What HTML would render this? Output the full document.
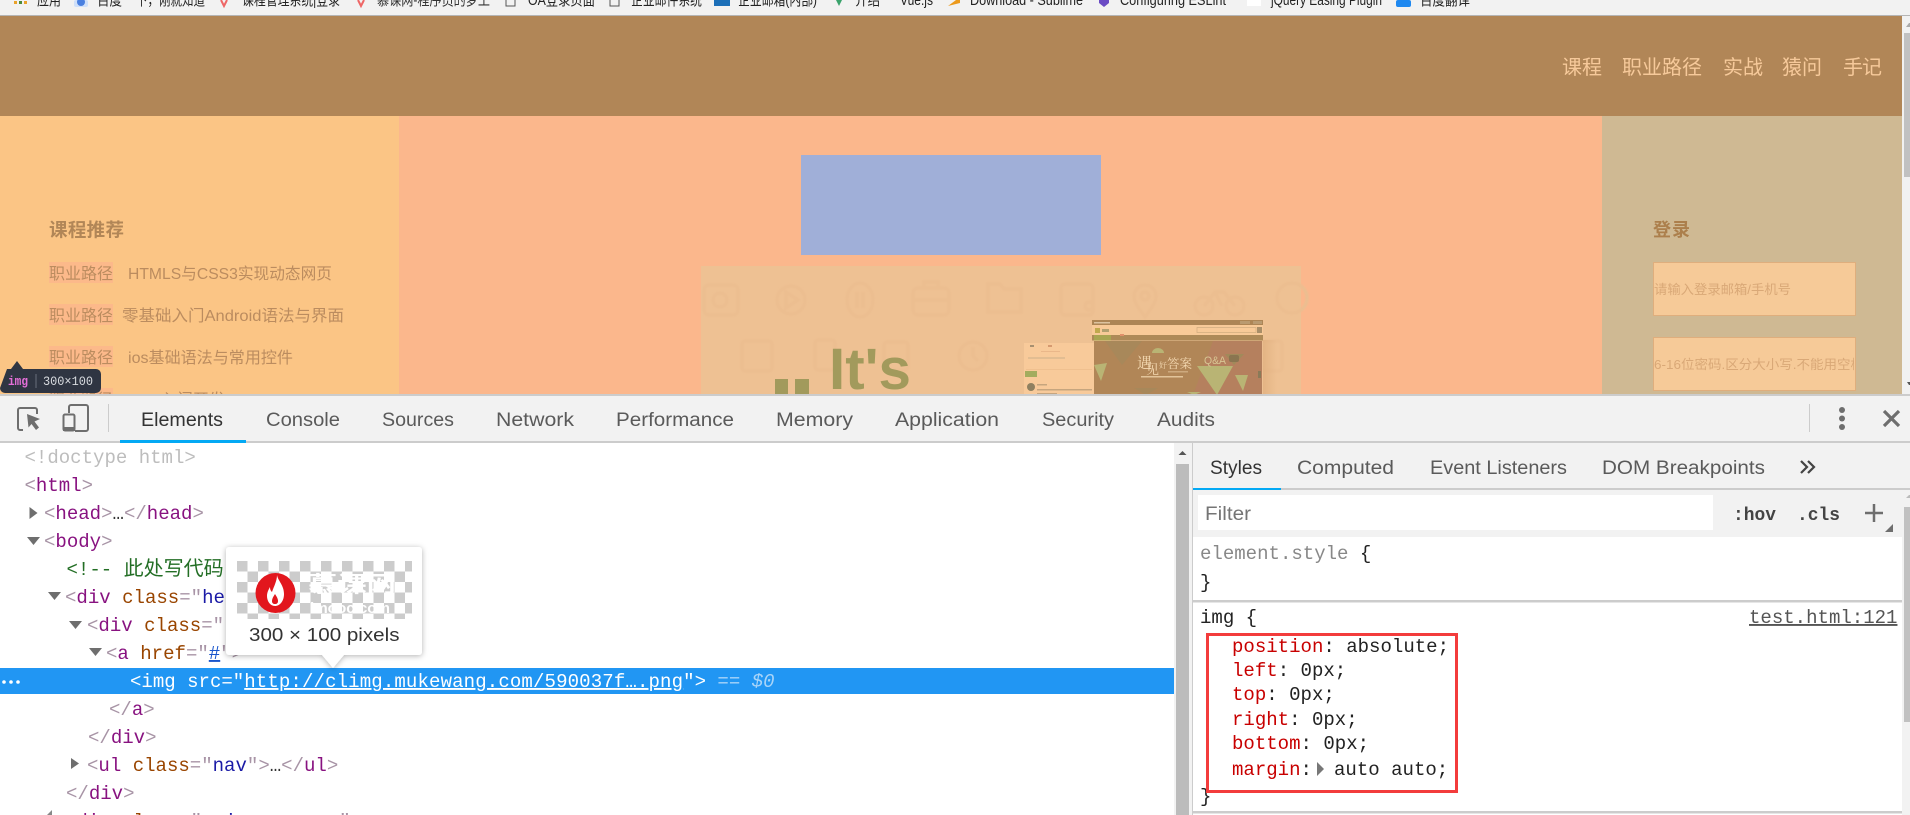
<!DOCTYPE html>
<html lang="zh">
<head>
<meta charset="utf-8">
<title>DevTools</title>
<style>
html,body{margin:0;padding:0;width:1910px;height:815px;overflow:hidden;background:#fff}
svg{display:block}
.s{font-family:"Liberation Sans","Noto Sans CJK SC",sans-serif}
.c{font-family:"Liberation Sans","Noto Sans CJK SC",sans-serif}
.m{font-family:"Liberation Mono","Noto Sans CJK SC",monospace;font-size:19.05px;white-space:pre}
.t{font-family:"Liberation Sans",sans-serif;font-size:19px;fill:#5a5a5a}
.b{font-size:15px;fill:#222}
.p{fill:#a894a6}.n{fill:#881280}.a{fill:#994500}.v{fill:#1a1aa6}
.r{fill:#c80000}.k{fill:#222}
</style>
</head>
<body>
<svg xmlns="http://www.w3.org/2000/svg" width="1910" height="815" viewBox="0 0 1910 815">
<defs>
<pattern id="chk" x="237" y="561" width="21" height="21" patternUnits="userSpaceOnUse">
<rect width="21" height="21" fill="#fff"/>
<rect width="10.5" height="10.5" fill="#ccc"/>
<rect x="10.5" y="10.5" width="10.5" height="10.5" fill="#ccc"/>
</pattern>
<filter id="sh" x="-20%" y="-20%" width="140%" height="140%"><feDropShadow dx="0" dy="1" stdDeviation="3" flood-color="#000" flood-opacity=".3"/></filter>
<filter id="bl"><feGaussianBlur stdDeviation=".8"/></filter>
<linearGradient id="sd" x1="0" x2="1" y1="0" y2="0"><stop offset="0" stop-color="#dfae7d" stop-opacity=".7"/><stop offset="1" stop-color="#dfae7d" stop-opacity="0"/></linearGradient>
<clipPath id="pg"><rect x="0" y="16" width="1902" height="378"/></clipPath>
<clipPath id="pw"><rect x="1653" y="338" width="201" height="52"/></clipPath>
<clipPath id="hero"><rect x="1094" y="341" width="168" height="53"/></clipPath>
</defs>

<!-- bookmarks -->
<rect width="1910" height="15" fill="#f2f2f2"/>
<rect y="15" width="1910" height="1" fill="#b5b5b5"/>
<g fill="#e9a32c"><rect x="14" y="1" width="3" height="3"/><rect x="19" y="1" width="3" height="3" fill="#4a8a3c"/><rect x="24" y="1" width="3" height="3"/></g>
<rect x="74" y="0" width="14" height="7" rx="2" fill="#cfe0fa"/><circle cx="81" cy="2" r="4" fill="#4a80e0"/>
<path d="M221 0l3 6 3-6" stroke="#e66" stroke-width="2" fill="none"/>
<path d="M358 0l3 6 3-6" stroke="#e66" stroke-width="2" fill="none"/>
<path d="M506 0v6h9v-6" stroke="#555" fill="none"/>
<path d="M610 0v6h9v-6" stroke="#555" fill="none"/>
<rect x="714" y="0" width="16" height="6" fill="#1c6fb8"/>
<path d="M836 0l3 6 3-6z" fill="#3aa36c"/>
<path d="M948 6l8-6h4v3z" fill="#ec9a1c"/>
<path d="M1099 0v3l5 4 5-4v-3z" fill="#6a4bc4"/>
<rect x="1247" y="0" width="14" height="6" fill="#fff"/>
<rect x="1396" y="0" width="15" height="7" rx="2" fill="#1e88f0"/>
<g class="c b">
<text x="37" y="5" textLength="24" lengthAdjust="spacingAndGlyphs">应用</text>
<text x="97" y="5" textLength="25" lengthAdjust="spacingAndGlyphs">百度</text>
<text x="136" y="5" textLength="69" lengthAdjust="spacingAndGlyphs">下，刚就知道</text>
<text x="242" y="5" textLength="98" lengthAdjust="spacingAndGlyphs">课程管理系统|登录</text>
<text x="377" y="5" textLength="113" lengthAdjust="spacingAndGlyphs" fill="#333">慕课网-程序员的梦工</text>
<text x="528" y="5" textLength="67" lengthAdjust="spacingAndGlyphs">OA登录页面</text>
<text x="631" y="5" textLength="71" lengthAdjust="spacingAndGlyphs">企业邮件系统</text>
<text x="738" y="5" textLength="79" lengthAdjust="spacingAndGlyphs">企业邮箱(内部)</text>
<text x="855" y="5" textLength="25" lengthAdjust="spacingAndGlyphs">介绍</text>
<text x="900" y="5" textLength="33" lengthAdjust="spacingAndGlyphs">Vue.js</text>
<text x="970" y="5" textLength="113" lengthAdjust="spacingAndGlyphs">Download - Sublime</text>
<text x="1120" y="5" textLength="106" lengthAdjust="spacingAndGlyphs">Configuring ESLint</text>
<text x="1271" y="5" textLength="111" lengthAdjust="spacingAndGlyphs">jQuery Easing Plugin</text>
<text x="1420" y="5" textLength="50" lengthAdjust="spacingAndGlyphs">百度翻译</text>
</g>

<!-- page -->
<rect x="1902" y="16" width="8" height="379" fill="#f1f1f1"/>
<rect x="1904" y="33" width="6" height="144" fill="#c1c1c1"/>
<path d="M1906 27l3-4 1 0v4z" fill="#aaa"/>
<path d="M1907 382h3v3h-1z" fill="#555"/>
<g clip-path="url(#pg)">
<rect x="0" y="16" width="1902" height="100" fill="#b18657"/>
<rect x="0" y="116" width="399" height="280" fill="#fbc585"/>
<rect x="399" y="116" width="1203" height="280" fill="#fbb78c"/>
<rect x="1602" y="116" width="300" height="280" fill="#cfb993"/>

<g class="c" font-size="20" fill="#f6c99a">
<text x="1562" y="74" textLength="40">课程</text>
<text x="1622" y="74" textLength="80">职业路径</text>
<text x="1723" y="74" textLength="40">实战</text>
<text x="1782" y="74" textLength="40">猿问</text>
<text x="1843" y="74" textLength="39">手记</text>
</g>

<text class="c" x="49" y="236.5" font-size="18.5" font-weight="700" fill="#b18657" textLength="75">课程推荐</text>
<g fill="#fcb98a">
<rect x="49" y="262" width="64" height="21"/><rect x="49" y="304" width="64" height="21"/><rect x="49" y="346" width="64" height="21"/><rect x="49" y="388" width="64" height="21"/>
</g>
<g class="c" font-size="16" fill="#bb8c5f">
<text x="49" y="279" textLength="64">职业路径</text>
<text x="128" y="279" textLength="204" lengthAdjust="spacingAndGlyphs">HTMLS与CSS3实现动态网页</text>
<text x="49" y="321" textLength="64">职业路径</text>
<text x="122" y="321" textLength="222" lengthAdjust="spacingAndGlyphs">零基础入门Android语法与界面</text>
<text x="49" y="363" textLength="64">职业路径</text>
<text x="128" y="363" textLength="165" lengthAdjust="spacingAndGlyphs">ios基础语法与常用控件</text>
<text x="49" y="405" textLength="64">职业路径</text>
<text x="128" y="405">PHP入门开发</text>
</g>

<rect x="801" y="155" width="300" height="100" fill="#a0afd8"/>

<!-- faded image -->
<rect x="701" y="266" width="600" height="130" fill="#eec193"/>
<g fill="none" stroke="#ecbe90" stroke-width="3.5" filter="url(#bl)">
<rect x="704" y="285" width="34" height="30" rx="5"/><circle cx="720" cy="300" r="7"/>
<circle cx="791" cy="300" r="14"/><path d="M786 292l12 8-12 8z"/>
<ellipse cx="860" cy="300" rx="13" ry="17"/><path d="M857 292v16M863 292v16"/>
<rect x="913" y="288" width="36" height="27" rx="5"/><path d="M924 288v-6h14v6M913 300h36"/>
<path d="M988 312v-28h12l4 5h17v23z"/>
<rect x="1061" y="284" width="32" height="31" rx="4"/><circle cx="1089" cy="306" r="4"/>
<path d="M1145 317c-8-11-11-15-11-21a11 11 0 0 1 22 0c0 6-3 10-11 21z"/><circle cx="1145" cy="296" r="4"/>
<circle cx="1204" cy="306" r="9"/><circle cx="1235" cy="306" r="9"/><path d="M1204 306l11-14h9l11 14M1215 292l7 14"/>
<circle cx="1292" cy="298" r="15"/>
<rect x="742" y="341" width="30" height="30" rx="3"/>
<rect x="815" y="340" width="20" height="30" rx="3"/>
<rect x="884" y="342" width="24" height="28" rx="3"/>
<circle cx="973" cy="356" r="14"/><path d="M973 347v9l5 5"/>
<rect x="1262" y="341" width="20" height="30" rx="3"/>
</g>
<g fill="#a29a5c">
<rect x="775" y="379" width="13" height="16"/><rect x="795" y="379" width="14" height="16"/>
<text class="s" x="829" y="389" font-size="58" font-weight="700" textLength="82" lengthAdjust="spacingAndGlyphs">It's</text>
</g>
<!-- left widget -->
<rect x="1263" y="340" width="14" height="56" fill="url(#sd)"/>
<rect x="1024" y="343" width="70" height="52" fill="#f8ca9a"/>
<rect x="1030" y="345" width="4" height="2" fill="#a89070"/><rect x="1048" y="345" width="4" height="2" fill="#d69a70"/>
<rect x="1041" y="351" width="19" height="1" fill="#eab78a"/>
<rect x="1028" y="357" width="37" height="2" fill="#e2bd92"/>
<rect x="1026" y="369" width="66" height="1" fill="#f0c08f"/>
<rect x="1025" y="371" width="12" height="6" fill="#a3ac5e"/>
<circle cx="1031" cy="387" r="4" fill="#8f8060"/>
<rect x="1037" y="384" width="10" height="1.5" fill="#c6a57e"/>
<rect x="1037" y="389" width="55" height="1.5" fill="#c6a57e"/>
<rect x="1037" y="393" width="20" height="1.5" fill="#c6a57e"/>
<!-- screen widget -->
<rect x="1092" y="320" width="171" height="5" fill="#ad8555"/>
<rect x="1094" y="322" width="16" height="1.5" fill="#dcc3a0"/>
<rect x="1240" y="321" width="10" height="3" fill="#b99a70"/><rect x="1253" y="321" width="9" height="3" fill="#b99a70"/>
<rect x="1092" y="325" width="171" height="10" fill="#f8ca98"/>
<rect x="1095" y="328" width="5" height="5" fill="#c0a94e"/>
<rect x="1102" y="329" width="7" height="3" fill="#b2a070"/>
<rect x="1197" y="327.500" width="59" height="5" fill="none" stroke="#cfab7e" stroke-width=".7"/>
<rect x="1257" y="327" width="5" height="6" fill="#a98e68"/>
<rect x="1092" y="335" width="171" height="5.5" fill="#ae8a58"/>
<rect x="1094" y="335" width="17" height="5.5" fill="#a9a552"/>
<rect x="1120" y="334" width="4" height="2" fill="#e0906a"/>
<rect x="1094" y="341" width="168" height="54" fill="#b5805e"/>
<g clip-path="url(#hero)">
<path d="M1094 341h119l-20 54h-99z" fill="#b18657"/>
<path d="M1105 341h37l-20 24z" fill="#a8885a"/>
<path d="M1094 365l13-2-6 18z" fill="#b9b474"/>
<path d="M1134 388h24l-12 7z" fill="#a8885a"/>
<path d="M1197 366h36l-16 29z" fill="#b9b474"/>
<path d="M1235 375h13l-5 16z" fill="#b9b474"/>
<path d="M1187 392h14l-7 3z" fill="#b9b474"/>
<path d="M1225 354h19l-10 11z" fill="#a18a5a"/>
</g>
<g font-family="'Noto Serif CJK SC',serif" fill="#f4d9b2">
<text x="1137" y="368" font-size="15">遇</text>
<text x="1146" y="374" font-size="13">见</text>
<text x="1159" y="368" font-size="8">好</text>
<text x="1167" y="368" font-size="12.500">答案</text>
</g>
<path d="M1152 353a6 5 0 0 1 12 0z" fill="#b9b474"/>
<rect x="1168" y="371" width="20" height="1.500" fill="#cda97e"/>
<rect x="1141" y="376" width="42" height="1.500" fill="#e2c49a"/>
<text class="s" x="1204" y="364" font-size="11" fill="#d8c694" textLength="22" lengthAdjust="spacingAndGlyphs">Q&amp;A</text>
<rect x="1229" y="355" width="10" height="7" rx="2" fill="#8a7550"/>
<rect x="1258" y="371" width="3" height="7" fill="#8a7a58"/>

<!-- login -->
<text class="c" x="1653" y="236" font-size="18" font-weight="700" fill="#ac7f4c" textLength="37">登录</text>
<rect x="1653.5" y="262.5" width="202" height="53" fill="#f6ca98" stroke="#dfae7d"/>
<rect x="1653.5" y="337.5" width="202" height="53" fill="#f6ca98" stroke="#dfae7d"/>
<text class="c" x="1654" y="294" font-size="13" fill="#d9a877" textLength="137" lengthAdjust="spacingAndGlyphs">请输入登录邮箱/手机号</text>
<g clip-path="url(#pw)"><text class="c" x="1654" y="369" font-size="13" fill="#d9a877" textLength="210" lengthAdjust="spacingAndGlyphs">6-16位密码.区分大小写.不能用空格</text></g>
</g>

<!-- img size tooltip -->
<path d="M7 369h4l6-8 6 8h73a5 5 0 0 1 5 5v14a5 5 0 0 1-5 5H5a5 5 0 0 1-5-5z" fill="#2f3542"/>
<text x="8" y="385" font-family="'Liberation Mono',monospace" font-size="12.5" font-weight="700" fill="#e46fd8" textLength="20" lengthAdjust="spacingAndGlyphs">img</text>
<rect x="35.5" y="374" width="1" height="14" fill="#6a707c"/>
<text x="43" y="385" font-family="'Liberation Mono',monospace" font-size="12.5" fill="#d8dbdf" textLength="50" lengthAdjust="spacingAndGlyphs">300×100</text>

<!-- devtools -->
<rect y="394" width="1910" height="2" fill="#ccc"/>
<rect y="396" width="1910" height="45" fill="#f2f2f2"/>
<rect y="441" width="1910" height="2" fill="#ccc"/>
<rect x="120" y="440" width="126" height="3" fill="#03a9f4"/>
<!-- inspect icon -->
<path d="M23 430h-3a2 2 0 0 1-2-2v-18a2 2 0 0 1 2-2h15a2 2 0 0 1 2 2v4" fill="none" stroke="#6e6e6e" stroke-width="2"/>
<path d="M27 414l13 5-5.500 2.500 4.500 6-3 2.500-4.500-6-3 3.500z" fill="#6e6e6e"/>
<!-- device icon -->
<path d="M69 413v-6a2 2 0 0 1 2-2h15a2 2 0 0 1 2 2v22a2 2 0 0 1-2 2h-11" fill="none" stroke="#6e6e6e" stroke-width="2"/>
<rect x="63.500" y="414.500" width="11" height="16" rx="1.500" fill="#f2f2f2" stroke="#6e6e6e" stroke-width="2"/>
<rect x="63" y="427" width="12" height="4" fill="#6e6e6e"/>
<rect x="108" y="404" width="1" height="28" fill="#ccc"/>
<rect x="1809" y="404" width="1" height="28" fill="#ccc"/>
<g fill="#6e6e6e"><circle cx="1842" cy="410" r="3"/><circle cx="1842" cy="418.500" r="3"/><circle cx="1842" cy="427" r="3"/></g>
<path d="M1884 411l15 15M1899 411l-15 15" stroke="#6e6e6e" stroke-width="3.200" fill="none"/>

<g class="t">
<text x="141" y="426" textLength="82" lengthAdjust="spacingAndGlyphs" style="fill:#333">Elements</text>
<text x="266" y="426" textLength="74" lengthAdjust="spacingAndGlyphs">Console</text>
<text x="382" y="426" textLength="72" lengthAdjust="spacingAndGlyphs">Sources</text>
<text x="496" y="426" textLength="78" lengthAdjust="spacingAndGlyphs">Network</text>
<text x="616" y="426" textLength="118" lengthAdjust="spacingAndGlyphs">Performance</text>
<text x="776" y="426" textLength="77" lengthAdjust="spacingAndGlyphs">Memory</text>
<text x="895" y="426" textLength="104" lengthAdjust="spacingAndGlyphs">Application</text>
<text x="1042" y="426" textLength="72" lengthAdjust="spacingAndGlyphs">Security</text>
<text x="1157" y="426" textLength="58" lengthAdjust="spacingAndGlyphs">Audits</text>
</g>

<!-- selected row -->
<rect x="0" y="668" width="1174" height="26" fill="#2196f3"/>
<g fill="#fff"><circle cx="4" cy="682" r="1.800"/><circle cx="11" cy="682" r="1.800"/><circle cx="18" cy="682" r="1.800"/></g>

<!-- dom tree -->
<g class="m">
<text x="24.500" y="463" fill="#bdbdbd">&lt;!doctype html&gt;</text>
<text x="24.500" y="491"><tspan class="p">&lt;</tspan><tspan class="n">html</tspan><tspan class="p">&gt;</tspan></text>
<text x="44" y="519"><tspan class="p">&lt;</tspan><tspan class="n">head</tspan><tspan class="p">&gt;</tspan><tspan fill="#333">…</tspan><tspan class="p">&lt;/</tspan><tspan class="n">head</tspan><tspan class="p">&gt;</tspan></text>
<text x="44" y="547"><tspan class="p">&lt;</tspan><tspan class="n">body</tspan><tspan class="p">&gt;</tspan></text>
<text x="66.500" y="575" fill="#236e25">&lt;!-- <tspan font-size="20">此处写代码</tspan></text>
<text x="65" y="603"><tspan class="p">&lt;</tspan><tspan class="n">div</tspan> <tspan class="a">class</tspan><tspan class="p">="</tspan><tspan class="v">he</tspan></text>
<text x="87" y="631"><tspan class="p">&lt;</tspan><tspan class="n">div</tspan> <tspan class="a">class</tspan><tspan class="p">="</tspan></text>
<text x="106" y="659"><tspan class="p">&lt;</tspan><tspan class="n">a</tspan> <tspan class="a">href</tspan><tspan class="p">="</tspan><tspan fill="#1a55cc" text-decoration="underline">#</tspan><tspan class="p">"&gt;</tspan></text>
<text x="130" y="687" fill="#fff">&lt;img src="<tspan text-decoration="underline" letter-spacing=".13">http://climg.mukewang.com/590037f….png</tspan>"&gt; <tspan fill="#a8d4f8" font-style="italic">== $0</tspan></text>
<text x="109" y="715"><tspan class="p">&lt;/</tspan><tspan class="n">a</tspan><tspan class="p">&gt;</tspan></text>
<text x="88" y="743"><tspan class="p">&lt;/</tspan><tspan class="n">div</tspan><tspan class="p">&gt;</tspan></text>
<text x="87" y="771"><tspan class="p">&lt;</tspan><tspan class="n">ul</tspan> <tspan class="a">class</tspan><tspan class="p">="</tspan><tspan class="v">nav</tspan><tspan class="p">"&gt;</tspan><tspan fill="#333">…</tspan><tspan class="p">&lt;/</tspan><tspan class="n">ul</tspan><tspan class="p">&gt;</tspan></text>
<text x="66" y="799"><tspan class="p">&lt;/</tspan><tspan class="n">div</tspan><tspan class="p">&gt;</tspan></text>
<text x="65" y="827"><tspan class="p">&lt;</tspan><tspan class="n">div</tspan> <tspan class="a">class</tspan><tspan class="p">="</tspan><tspan class="v">main-wrapper</tspan><tspan class="p">"&gt;</tspan></text>
</g>
<g fill="#6e6e6e">
<path d="M29.500 507v12l8-6z"/>
<path d="M27 537h13l-6.500 8z"/>
<path d="M48 592h13l-6.500 8z"/>
<path d="M69 621h13l-6.500 8z"/>
<path d="M89 648h13l-6.500 8z"/>
<path d="M71 758v11l8-5.500z"/>
<path d="M47 815l5-5v5z" fill="#888"/>
</g>

<!-- popover -->
<g filter="url(#sh)"><path d="M229 547h190a3 3 0 0 1 3 3v102a3 3 0 0 1-3 3h-75l-11 13-11-13h-93a3 3 0 0 1-3-3v-102a3 3 0 0 1 3-3z" fill="#fff"/></g>
<rect x="237" y="561" width="175" height="58" fill="url(#chk)"/>
<circle cx="275.500" cy="593" r="20" fill="#e2161d"/>
<path d="M277 575c1 6 7 10 7 19 0 7-4 12-9 12-5 0-8-5-8-10 0-4 2-7 3-9 0 3 1 4 2 5 2-6 5-11 5-17zM275 594c-2 3-3 5-3 7 0 2 1 3 3 3 2 0 3-1 3-3 0-2-1-4-3-7z" fill="#fff" fill-rule="evenodd"/>
<text class="c" x="308" y="592" font-size="22" font-weight="700" fill="#fff" textLength="88" lengthAdjust="spacingAndGlyphs">慕课网</text>
<text class="s" x="310" y="613" font-size="15" font-weight="700" fill="#fff" textLength="80" lengthAdjust="spacingAndGlyphs">imooc.com</text>
<text class="s" x="249" y="641" font-size="18.500" fill="#333" textLength="150.500" lengthAdjust="spacingAndGlyphs">300 × 100 pixels</text>

<!-- elements scrollbar -->
<rect x="1174" y="443" width="18" height="372" fill="#f2f2f2"/>
<rect x="1176" y="464" width="13" height="351" fill="#bcbcbc"/>
<path d="M1178.500 455l4-4 4 4z" fill="#555"/>
<rect x="1192" y="443" width="1.500" height="372" fill="#ccc"/>

<!-- styles pane -->
<rect x="1193" y="443" width="717" height="45" fill="#f2f2f2"/>
<rect x="1193" y="488" width="717" height="2" fill="#ccc"/>
<rect x="1193" y="488" width="88" height="3" fill="#03a9f4"/>
<g class="t">
<text x="1210" y="474" textLength="52" lengthAdjust="spacingAndGlyphs" style="fill:#333">Styles</text>
<text x="1297" y="474" textLength="97" lengthAdjust="spacingAndGlyphs">Computed</text>
<text x="1430" y="474" textLength="137" lengthAdjust="spacingAndGlyphs">Event Listeners</text>
<text x="1602" y="474" textLength="163" lengthAdjust="spacingAndGlyphs">DOM Breakpoints</text>
</g>
<path d="M1801 461l6 6-6 6M1808 461l6 6-6 6" fill="none" stroke="#444" stroke-width="2.200"/>
<rect x="1193" y="490" width="709" height="47" fill="#f2f2f2"/>
<rect x="1198" y="495" width="515" height="35" fill="#fff"/>
<text class="s" x="1205" y="520" font-size="19" fill="#757575" textLength="46" lengthAdjust="spacingAndGlyphs">Filter</text>
<g class="m" font-weight="700" fill="#444">
<text x="1733" y="520" style="font-size:18.500px" textLength="43" lengthAdjust="spacingAndGlyphs">:hov</text>
<text x="1797" y="520" style="font-size:18.500px" textLength="43" lengthAdjust="spacingAndGlyphs">.cls</text>
</g>
<path d="M1874 504v18M1865 513h18" stroke="#6e6e6e" stroke-width="2.500"/>
<path d="M1893 524v8h-8z" fill="#6e6e6e"/>
<rect x="1193" y="537" width="709" height="278" fill="#fff"/>
<rect x="1193" y="600" width="709" height="2.500" fill="#ccc"/>
<rect x="1193" y="811" width="709" height="2.500" fill="#ccc"/>
<rect x="1902" y="490" width="8" height="325" fill="#f2f2f2"/>
<rect x="1904" y="507" width="6" height="215" fill="#c1c1c1"/>
<path d="M1906 498l3-3 1 0v3z" fill="#bbb"/>
<g class="m">
<text x="1200" y="559"><tspan fill="#888">element.style</tspan> <tspan fill="#222">{</tspan></text>
<text x="1200" y="588" fill="#222">}</text>
<text x="1200" y="623" fill="#222">img {</text>
<text x="1749" y="623" fill="#555" text-decoration="underline">test.html:121</text>
<text x="1232" y="652"><tspan class="r">position</tspan><tspan class="k">: absolute;</tspan></text>
<text x="1232" y="676"><tspan class="r">left</tspan><tspan class="k">: 0px;</tspan></text>
<text x="1232" y="700"><tspan class="r">top</tspan><tspan class="k">: 0px;</tspan></text>
<text x="1232" y="725"><tspan class="r">right</tspan><tspan class="k">: 0px;</tspan></text>
<text x="1232" y="749"><tspan class="r">bottom</tspan><tspan class="k">: 0px;</tspan></text>
<text x="1232" y="775"><tspan class="r">margin</tspan><tspan class="k">:</tspan></text>
<text x="1334" y="775" class="k">auto auto;</text>
<text x="1200" y="802" fill="#222">}</text>
</g>
<path d="M1317 762v14l7-7z" fill="#777"/>
<rect x="1207.500" y="634.500" width="249" height="157" fill="none" stroke="#f33c3c" stroke-width="3"/>
</svg>
</body>
</html>
